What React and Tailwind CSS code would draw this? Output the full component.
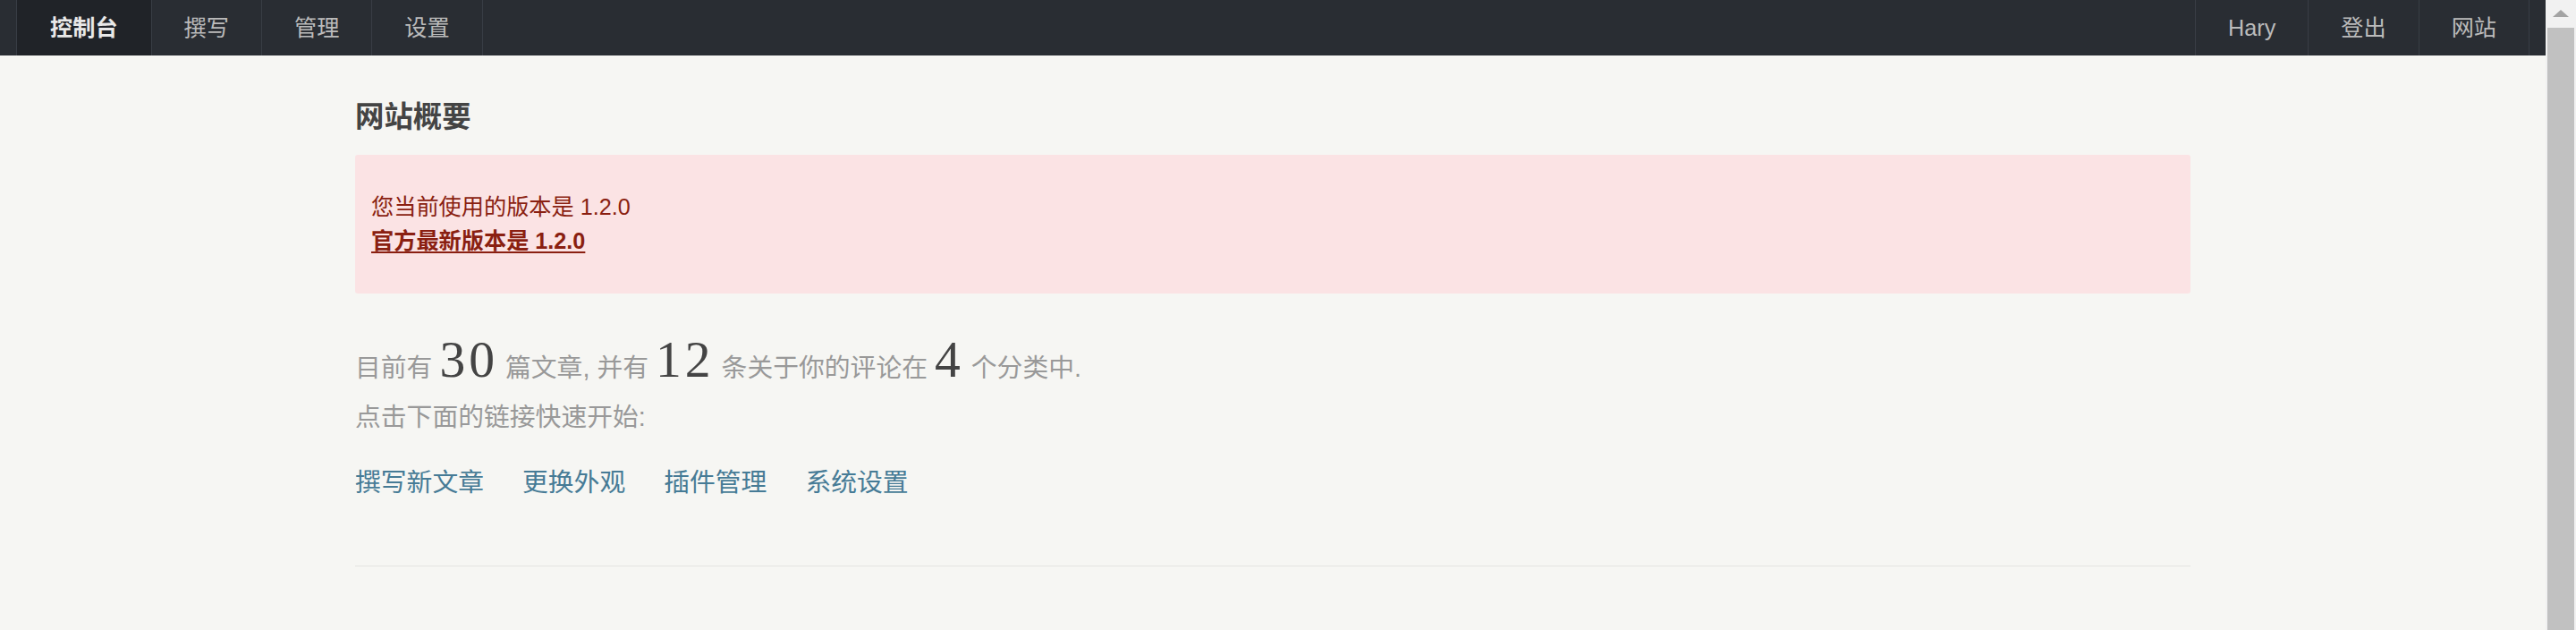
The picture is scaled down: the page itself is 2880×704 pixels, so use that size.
import React from 'react'

const leftNav = [
    { label: '控制台', active: true },
    { label: '撰写' },
    { label: '管理' },
    { label: '设置' },
]

const rightNav = ['Hary', '登出', '网站']

const quickLinks = ['撰写新文章', '更换外观', '插件管理', '系统设置']

function HeadNav() {
    return (
        <header className="flex h-[62px] justify-between bg-[#292d33] px-[18px]">
            {/* Main menu */}
            <nav className="flex border-l border-[#383d45]">
                {leftNav.map((item) => (
                    <a
                        key={item.label}
                        className={
                            item.active
                                ? 'flex items-center border-r border-[#383d45] bg-[#202328] px-[37px] font-bold text-[#e8e8e8]'
                                : 'flex items-center border-r border-[#383d45] px-[36px] text-[#bbbbbb]'
                        }
                    >
                        {item.label}
                    </a>
                ))}
            </nav>

            {/* User operations */}
            <nav className="flex border-r border-[#383d45]">
                {rightNav.map((label) => (
                    <a key={label} className="flex items-center border-l border-[#383d45] px-[36px] text-[#bbbbbb]">
                        {label}
                    </a>
                ))}
            </nav>
        </header>
    )
}

function Scrollbar() {
    return (
        <div className="flex h-full w-[34px] shrink-0 flex-col bg-[#f1f1f1]">
            <div className="flex h-[31px] items-start justify-center pt-[11px]">
                <svg width="18" height="8" viewBox="0 0 18 8">
                    <polygon points="9,0 18,8 0,8" fill="#a3a3a3" />
                </svg>
            </div>
            <div className="mx-[2px] flex-1 bg-[#c1c1c1]"></div>
        </div>
    )
}

export default function App() {
    return (
        <div className="flex h-[704px] w-full overflow-hidden bg-[#f6f6f3] font-['Liberation_Sans','Noto_Sans_CJK_SC',sans-serif] text-[25.2px] leading-[38px]">
            <div className="min-w-0 flex-1">
                <HeadNav />

                <main className="mx-auto w-[2052px]">
                    <h2 className="mt-[45px] mb-[18px] text-[32.4px] leading-[48px] font-bold text-[#444444]">网站概要</h2>

                    {/* Version notice */}
                    <div className="rounded-[3px] bg-[#fbe3e4] px-[18px] pt-[39px] pb-[40px] text-[#8a1f11]">
                        <p>您当前使用的版本是 1.2.0</p>
                        <p>
                            <a className="font-bold underline underline-offset-[3px]">官方最新版本是 1.2.0</a>
                        </p>
                    </div>

                    {/* Welcome board */}
                    <div className="mt-[56px] text-[28.8px] text-[#999999]">
                        <p className="leading-[55px]">
                            目前有 <em className="font-['Liberation_Serif',serif] text-[57.6px] leading-[0] tracking-[4px] not-italic text-[#444444] oldstyle-nums">30</em> 篇文章, 并有 <em className="font-['Liberation_Serif',serif] text-[57.6px] leading-[0] tracking-[4px] not-italic text-[#444444] oldstyle-nums">12</em> 条关于你的评论在 <em className="font-['Liberation_Serif',serif] text-[57.6px] leading-[0] tracking-[4px] not-italic text-[#444444] oldstyle-nums">4</em> 个分类中.
                            <br />
                            点击下面的链接快速开始:
                        </p>
                        <ul className="mt-[24px] flex gap-[43px] leading-[43px] text-[#467b96]">
                            {quickLinks.map((link) => (
                                <li key={link}>
                                    <a>{link}</a>
                                </li>
                            ))}
                        </ul>
                    </div>

                    <div className="mt-[71px] border-t border-[#e4e4e1]"></div>
                </main>
            </div>

            <Scrollbar />
        </div>
    )
}
